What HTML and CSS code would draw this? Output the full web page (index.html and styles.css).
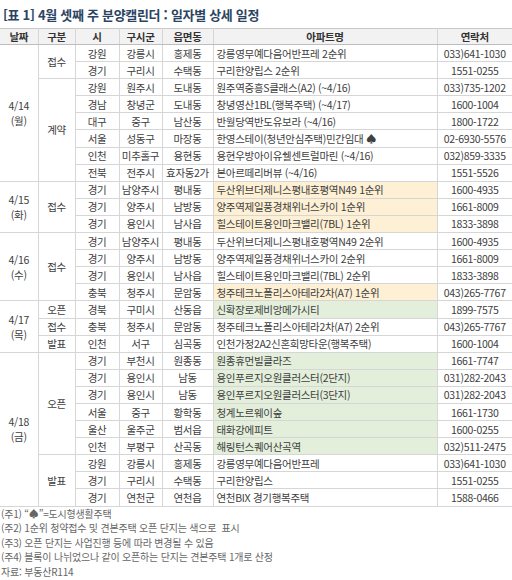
FILE: index.html
```html
<!DOCTYPE html>
<html lang="ko">
<head>
<meta charset="utf-8">
<link rel="stylesheet" href="styles.css">
</head>
<body>
<h1 class="title">[표 1] 4월 셋째 주 분양캘린더 : 일자별 상세 일정</h1>
<table class="cal">
  <colgroup>
    <col class="c-date"><col class="c-type"><col class="c-si"><col class="c-gu"><col class="c-dong"><col class="c-apt"><col class="c-tel">
  </colgroup>
  <thead>
    <tr><th>날짜</th><th>구분</th><th>시</th><th>구시군</th><th>읍면동</th><th>아파트명</th><th>연락처</th></tr>
  </thead>
  <tbody class="grp">
    <tr><td rowspan="8" class="date">4/14<br>(월)</td><td rowspan="2">접수</td><td>강원</td><td>강릉시</td><td>홍제동</td><td class="apt">강릉영무예다음어반프레 2순위</td><td>033)641-1030</td></tr>
    <tr><td>경기</td><td>구리시</td><td>수택동</td><td class="apt">구리한양립스 2순위</td><td>1551-0255</td></tr>
    <tr><td rowspan="6">계약</td><td>강원</td><td>원주시</td><td>도내동</td><td class="apt">원주역중흥S클래스(A2) (~4/16)</td><td>033)735-1202</td></tr>
    <tr><td>경남</td><td>창녕군</td><td>도내동</td><td class="apt">창녕영산1BL(행복주택) (~4/17)</td><td>1600-1004</td></tr>
    <tr><td>대구</td><td>중구</td><td>남산동</td><td class="apt">반월당역반도유보라 (~4/16)</td><td>1800-1722</td></tr>
    <tr><td>서울</td><td>성동구</td><td>마장동</td><td class="apt">한영스테이(청년안심주택)민간임대 ♠</td><td>02-6930-5576</td></tr>
    <tr><td>인천</td><td>미추홀구</td><td>용현동</td><td class="apt">용현우방아이유쉘센트럴마린 (~4/16)</td><td>032)859-3335</td></tr>
    <tr><td>전북</td><td>전주시</td><td>효자동2가</td><td class="apt">본아르떼리버뷰 (~4/16)</td><td>1551-5526</td></tr>
  </tbody>
  <tbody class="grp">
    <tr><td rowspan="3" class="date">4/15<br>(화)</td><td rowspan="3">접수</td><td>경기</td><td>남양주시</td><td>평내동</td><td class="apt hl-y">두산위브더제니스평내호평역N49 1순위</td><td>1600-4935</td></tr>
    <tr><td>경기</td><td>양주시</td><td>남방동</td><td class="apt hl-y">양주역제일풍경채위너스카이 1순위</td><td>1661-8009</td></tr>
    <tr><td>경기</td><td>용인시</td><td>남사읍</td><td class="apt hl-y">힐스테이트용인마크밸리(7BL) 1순위</td><td>1833-3898</td></tr>
  </tbody>
  <tbody class="grp">
    <tr><td rowspan="4" class="date">4/16<br>(수)</td><td rowspan="4">접수</td><td>경기</td><td>남양주시</td><td>평내동</td><td class="apt">두산위브더제니스평내호평역N49 2순위</td><td>1600-4935</td></tr>
    <tr><td>경기</td><td>양주시</td><td>남방동</td><td class="apt">양주역제일풍경채위너스카이 2순위</td><td>1661-8009</td></tr>
    <tr><td>경기</td><td>용인시</td><td>남사읍</td><td class="apt">힐스테이트용인마크밸리(7BL) 2순위</td><td>1833-3898</td></tr>
    <tr><td>충북</td><td>청주시</td><td>문암동</td><td class="apt hl-y">청주테크노폴리스아테라2차(A7) 1순위</td><td>043)265-7767</td></tr>
  </tbody>
  <tbody class="grp">
    <tr><td rowspan="3" class="date">4/17<br>(목)</td><td>오픈</td><td>경북</td><td>구미시</td><td>산동읍</td><td class="apt hl-g">신확장로제비앙메가시티</td><td>1899-7575</td></tr>
    <tr><td>접수</td><td>충북</td><td>청주시</td><td>문암동</td><td class="apt">청주테크노폴리스아테라2차(A7) 2순위</td><td>043)265-7767</td></tr>
    <tr><td>발표</td><td>인천</td><td>서구</td><td>심곡동</td><td class="apt">인천가정2A2신혼희망타운(행복주택)</td><td>1600-1004</td></tr>
  </tbody>
  <tbody class="grp">
    <tr><td rowspan="9" class="date">4/18<br>(금)</td><td rowspan="6">오픈</td><td>경기</td><td>부천시</td><td>원종동</td><td class="apt hl-g">원종휴먼빌클라즈</td><td>1661-7747</td></tr>
    <tr><td>경기</td><td>용인시</td><td>남동</td><td class="apt hl-g">용인푸르지오원클러스터(2단지)</td><td>031)282-2043</td></tr>
    <tr><td>경기</td><td>용인시</td><td>남동</td><td class="apt hl-g">용인푸르지오원클러스터(3단지)</td><td>031)282-2043</td></tr>
    <tr><td>서울</td><td>중구</td><td>황학동</td><td class="apt hl-g">청계노르웨이숲</td><td>1661-1730</td></tr>
    <tr><td>울산</td><td>울주군</td><td>범서읍</td><td class="apt hl-g">태화강에피트</td><td>1600-0255</td></tr>
    <tr><td>인천</td><td>부평구</td><td>산곡동</td><td class="apt hl-g">해링턴스퀘어산곡역</td><td>032)511-2475</td></tr>
    <tr><td rowspan="3">발표</td><td>강원</td><td>강릉시</td><td>홍제동</td><td class="apt">강릉영무예다음어반프레</td><td>033)641-1030</td></tr>
    <tr><td>경기</td><td>구리시</td><td>수택동</td><td class="apt">구리한양립스</td><td>1551-0255</td></tr>
    <tr><td>경기</td><td>연천군</td><td>연천읍</td><td class="apt">연천BIX 경기행복주택</td><td>1588-0466</td></tr>
  </tbody>
</table>
<ul class="notes">
  <li>(주1) “♠”=도시형생활주택</li>
  <li>(주2) 1순위 청약접수 및 견본주택 오픈 단지는 색으로&nbsp; 표시</li>
  <li>(주3) 오픈 단지는 사업진행 등에 따라 변경될 수 있음</li>
  <li>(주4) 블록이 나뉘었으나 같이 오픈하는 단지는 견본주택 1개로 산정</li>
  <li>자료: 부동산R114</li>
</ul>
</body>
</html>
```

FILE: styles.css
```css
html, body {
  margin: 0;
  padding: 0;
  background: #ffffff;
}
body {
  width: 512px;
  font-family: "Noto Sans CJK KR", "Noto Sans", sans-serif;
  color: #404040;
}
.title {
  margin: 0;
  padding: 6px 0 0 3px;
  height: 22px;
  font-size: 13px;
  line-height: 18px;
  font-weight: bold;
  color: #2b4462;
  letter-spacing: -0.3px;
}
.cal {
  width: 512px;
  border-collapse: collapse;
  table-layout: fixed;
  font-size: 10.5px;
  letter-spacing: -0.3px;
}
.c-date { width: 38px; }
.c-type { width: 37px; }
.c-si { width: 44px; }
.c-gu { width: 43px; }
.c-dong { width: 51px; }
.c-apt { width: 224px; }
.c-tel { width: 75px; }
.cal th, .cal td {
  border: 1px solid #d6d6d6;
  padding: 0;
  text-align: center;
  vertical-align: middle;
  white-space: nowrap;
  overflow: hidden;
}
.cal th:first-child, .cal td.date { border-left: none; }
.cal th:last-child, .cal tr td:last-child { border-right: none; }
.cal th {
  height: 15px;
  line-height: 15px;
  background: #f2f2f2;
  font-weight: bold;
  color: #333;
  border-top: 1px solid #c8c8c8;
  border-bottom: 1px solid #bdbdbd;
}
.cal td {
  height: 16.1px;
  line-height: 15px;
}
.cal td.date { line-height: 15px; }
.cal td.apt {
  text-align: left;
  padding-left: 3px;
}
.hl-y { background: #fdf0d4; }
.hl-g { background: #e3efdb; }
.notes {
  list-style: none;
  margin: 0;
  padding: 0 0 0 1px;
  font-size: 10px;
  line-height: 14.5px;
  color: #666;
  letter-spacing: -0.2px;
}
```
